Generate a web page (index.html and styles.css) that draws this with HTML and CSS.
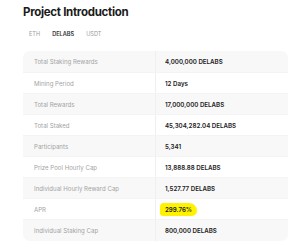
FILE: index.html
```html
<!DOCTYPE html>
<html>
<head>
<meta charset="utf-8">
<link rel="stylesheet" href="styles.css">
</head>
<body>
<div class="page">
  <h1 class="title">Project Introduction</h1>
  <div class="tabs">
    <span class="tab">ETH</span>
    <span class="tab active">DELABS</span>
    <span class="tab">USDT</span>
  </div>
  <div class="table">
    <div class="row"><div class="label">Total Staking Rewards</div><div class="value">4,000,000 DELABS</div></div>
    <div class="row"><div class="label">Mining Period</div><div class="value">12 Days</div></div>
    <div class="row"><div class="label">Total Rewards</div><div class="value">17,000,000 DELABS</div></div>
    <div class="row"><div class="label">Total Staked</div><div class="value">45,304,282.04 DELABS</div></div>
    <div class="row"><div class="label">Participants</div><div class="value">5,341</div></div>
    <div class="row"><div class="label">Prize Pool Hourly Cap</div><div class="value">13,888.88 DELABS</div></div>
    <div class="row"><div class="label">Individual Hourly Reward Cap</div><div class="value">1,527.77 DELABS</div></div>
    <div class="row"><div class="label">APR</div><div class="value"><span class="mark">299.76%</span></div></div>
    <div class="row"><div class="label">Individual Staking Cap</div><div class="value">800,000 DELABS</div></div>
  </div>
</div>
</body>
</html>
```
FILE: styles.css
```css
* { box-sizing: border-box; }
body {
  margin: 0;
  background: #fff;
  font-family: Inter, "Noto Sans", sans-serif;
  color: #222;
}
.page {
  padding: 3px 12px 0 23px;
}
.title {
  margin: 0;
  font-size: 11.5px;
  font-weight: 700;
  line-height: 18px;
  color: #1a1a1a;
  letter-spacing: -0.3px;
}
.tabs {
  display: flex;
  gap: 12px;
  padding: 7px 0 0 6px;
  height: 30px;
  font-size: 5.6px;
  line-height: 12px;
}
.tab { color: #9a9a9a; }
.tab.active { color: #333; font-weight: 600; }
.table {
  border-radius: 7px;
  overflow: hidden;
  width: 265px;
}
.row {
  display: grid;
  grid-template-columns: 133px 1fr;
  height: 21px;
  align-items: stretch;
  background: #f8f8f8;
  border-bottom: 1px solid #f4f4f4;
}
.row:nth-child(even) { background: #fff; }
.row:last-child { border-bottom: 0; }
.row:first-child { height: 22px; }
.label, .value {
  display: flex;
  align-items: center;
  padding-left: 11px;
}
.label { color: #a3a3a3; border-right: 1px solid #efefef; font-size: 6.1px; }
.value { color: #222; font-weight: 600; padding-left: 9px; font-size: 6.2px; }
.mark {
  background: #fff200;
  padding: 3px 5px;
  margin-left: -5px;
  border-radius: 4px 8px 5px 3px;
}
```
